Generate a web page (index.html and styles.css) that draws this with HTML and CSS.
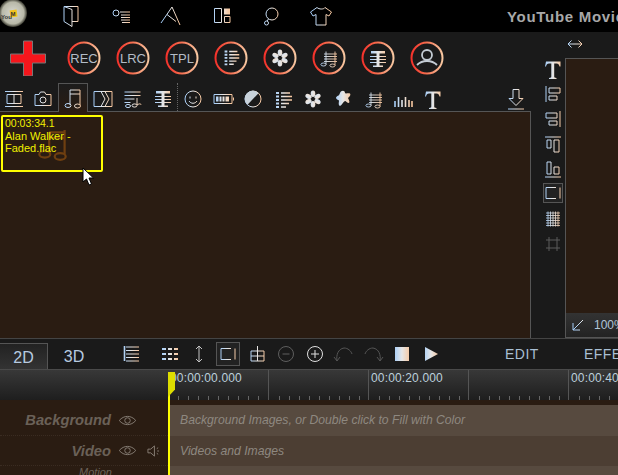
FILE: index.html
```html
<!DOCTYPE html>
<html lang="en">
<head>
    <meta charset="UTF-8">
    <meta name="viewport" content="width=device-width, initial-scale=1.0">
    <title>YouTube Movie Maker</title>
    <link rel="stylesheet" href="styles.css">
</head>
<body>
    <!-- shared gradients for the icons -->
    <svg class="defs" aria-hidden="true">
        <defs>
            <linearGradient id="g" gradientUnits="userSpaceOnUse" x1="4" y1="0" x2="20" y2="0">
                <stop offset="0" stop-color="#a5cdf8"/>
                <stop offset="0.5" stop-color="#e6e6e6"/>
                <stop offset="1" stop-color="#f6c7a0"/>
            </linearGradient>
            <linearGradient id="ring" gradientUnits="userSpaceOnUse" x1="1" y1="17" x2="33" y2="17">
                <stop offset="0" stop-color="#f5302a"/>
                <stop offset="0.45" stop-color="#f66a4c"/>
                <stop offset="1" stop-color="#f8cba4"/>
            </linearGradient>
            <radialGradient id="logoBg" cx="0.5" cy="0.5" r="0.5">
                <stop offset="0" stop-color="#d8d8d0"/>
                <stop offset="0.78" stop-color="#b8b8a8"/>
                <stop offset="1" stop-color="#3a3a30"/>
            </radialGradient>
            <symbol id="i-list" viewBox="0 0 24 24">
                <path d="M5 6h3M5 9.500h3M5 13h3M5 16.500h3M5 20h3" stroke-width="2"/>
                <path d="M10 6h9M10 9.500h11M10 13h11M10 16.500h8M10 20h5" stroke-width="1.600"/>
            </symbol>
            <symbol id="i-flower" viewBox="0 0 24 24">
                <g fill="url(#g)" stroke="none">
                    <ellipse cx="12" cy="6.800" rx="2.300" ry="3.300"/>
                    <ellipse cx="12" cy="17.200" rx="2.300" ry="3.300"/>
                    <ellipse cx="12" cy="6.800" rx="2.300" ry="3.300" transform="rotate(60 12 12)"/>
                    <ellipse cx="12" cy="6.800" rx="2.300" ry="3.300" transform="rotate(120 12 12)"/>
                    <ellipse cx="12" cy="6.800" rx="2.300" ry="3.300" transform="rotate(240 12 12)"/>
                    <ellipse cx="12" cy="6.800" rx="2.300" ry="3.300" transform="rotate(300 12 12)"/>
                </g>
            </symbol>
            <symbol id="i-score" viewBox="0 0 24 24">
                <path d="M10 5.500v13M19 5.500v14M8 8h13M8 10.500h13M8 13h13M8 15.500h13" stroke-width="0.900"/>
                <ellipse cx="7.500" cy="18.500" rx="2.600" ry="1.500" stroke-width="0.900"/>
                <ellipse cx="16.500" cy="19.500" rx="2.600" ry="1.500" stroke-width="0.900"/>
            </symbol>
            <symbol id="i-karaoke" viewBox="0 0 24 24">
                <path d="M5 5h14v2.500h-5.500v12H17v1.500H7v-1.500h3.500v-12H5z" fill="url(#g)" stroke="none"/>
                <path d="M4 10.500h16M4 13.500h16M4 16.500h16" stroke-width="1.200"/>
            </symbol>
            <symbol id="i-frame" viewBox="0 0 24 24">
                <path d="M5 6.500h10M5 6.500v11h10M19 6.500v11"/>
            </symbol>
            <symbol id="i-t" viewBox="0 0 24 24">
                <path d="M5 4.500h14.500v5h-1c-.4-2-1.300-3-3-3h-2.300v13c0 1 .6 1.300 2.300 1.500v1H8v-1c1.700-.2 2.300-.5 2.300-1.500v-13H8c-1.700 0-2.600 1-3 3H4z" fill="url(#g)" stroke="none"/>
            </symbol>
        </defs>
    </svg>

    <header class="topbar">
        <svg class="logo" viewBox="0 0 27 29">
            <circle cx="13" cy="13" r="14" fill="url(#logoBg)"/>
            <rect x="10" y="10" width="7" height="7" fill="#f2c21c" transform="rotate(-8 13 13)"/>
            <text x="1" y="19" class="logo-text">You</text>
            <text x="10.500" y="16" class="logo-text">M</text>
        </svg>
        <nav class="topnav">
            <svg class="ico" viewBox="0 0 24 24" fill="none" stroke="url(#g)">
                <path d="M5 2.500h14v15h-6M5 2.500l8 3v17l-8-5z"/>
            </svg>
            <svg class="ico" viewBox="0 0 24 24" fill="none" stroke="url(#g)">
                <circle cx="7" cy="9" r="3"/>
                <path d="M11 8h10M12 11h9M12 13.500h9M12 16h9M13 18.500h8"/>
            </svg>
            <svg class="ico" viewBox="0 0 24 24" fill="none" stroke="url(#g)">
                <path d="M2 19L13 3l8 18M8 10.500l9 7"/>
            </svg>
            <svg class="ico" viewBox="0 0 24 24" fill="none" stroke="url(#g)">
                <path d="M5.500 4.500h7v14h-7z"/>
                <path d="M15 4.500h6v6h-6z" fill="url(#g)" stroke="none"/>
                <path d="M15.500 12.500h5.500v6h-5.500z"/>
            </svg>
            <svg class="ico" viewBox="0 0 24 24" fill="none" stroke="url(#g)">
                <circle cx="13" cy="10" r="6"/>
                <circle cx="7.500" cy="19" r="2"/>
                <path d="M9.500 15l-1.500 2"/>
            </svg>
            <svg class="ico" viewBox="0 0 24 24" fill="none" stroke="url(#g)">
                <path d="M8 3.500L1.500 8l2.500 4 3-1.500v10.500h10V10.500l3 1.500 2.500-4-6.500-4.500c-1 2-6 2-8 0z"/>
            </svg>
        </nav>
        <div class="title">YouTube Movie Maker</div>
    </header>

    <div class="main">
        <section class="left-col">
            <div class="actions">
                <svg class="plus" viewBox="0 0 36 36">
                    <path d="M13.500 1h9v13h13v9h-13v13h-9V23H.5v-9h13z" fill="#f5161c" stroke="#777"/>
                </svg>
                <svg class="round" viewBox="0 0 34 34" fill="none"><circle cx="17" cy="17" r="15.500" stroke="url(#ring)"/><text x="17" y="21.500" class="round-text">REC</text></svg>
                <svg class="round" viewBox="0 0 34 34" fill="none"><circle cx="17" cy="17" r="15.500" stroke="url(#ring)"/><text x="17" y="21.500" class="round-text">LRC</text></svg>
                <svg class="round" viewBox="0 0 34 34" fill="none"><circle cx="17" cy="17" r="15.500" stroke="url(#ring)"/><text x="17" y="21.500" class="round-text">TPL</text></svg>
                <svg class="round" viewBox="0 0 34 34" fill="none"><circle cx="17" cy="17" r="15.500" stroke="url(#ring)"/><use href="#i-list" x="6" y="5" width="22" height="22" stroke="url(#g)"/></svg>
                <svg class="round" viewBox="0 0 34 34" fill="none"><circle cx="17" cy="17" r="15.500" stroke="url(#ring)"/><use href="#i-flower" x="5" y="5" width="24" height="24"/></svg>
                <svg class="round" viewBox="0 0 34 34" fill="none"><circle cx="17" cy="17" r="15.500" stroke="url(#ring)"/><use href="#i-score" x="4" y="5" width="24" height="24" stroke="url(#g)"/></svg>
                <svg class="round" viewBox="0 0 34 34" fill="none"><circle cx="17" cy="17" r="15.500" stroke="url(#ring)"/><use href="#i-karaoke" x="5" y="5" width="24" height="24" stroke="url(#g)"/></svg>
                <svg class="round" viewBox="0 0 34 34" fill="none">
                    <circle cx="17" cy="17" r="15.500" stroke="url(#ring)"/>
                    <circle cx="17" cy="14" r="5" stroke="#c4ccd4" stroke-width="1.800"/>
                    <path d="M7 24c3-3 5-4 10-4s7 1 10 4" stroke="#c4ccd4" stroke-width="1.800"/>
                </svg>
            </div>

            <div class="tabs">
                <div class="tab tab-first"><svg class="ico" viewBox="0 0 24 24" fill="none" stroke="url(#g)"><path d="M3 5.500h18M5 8.500h14v9H5zM12 8.500v9M3 20.500h18"/></svg></div>
                <div class="tab"><svg class="ico" viewBox="0 0 24 24" fill="none" stroke="url(#g)"><path d="M4 8.500h4l1.500-2.500h4L15 8.500h5v11H4z"/><circle cx="12" cy="14" r="3"/></svg></div>
                <div class="tab tab-active"><svg class="ico" viewBox="0 0 24 24" fill="none" stroke="url(#g)"><path d="M9 4v15M19 4v15M9 4h10M9 8h10"/><ellipse cx="7" cy="19.500" rx="3" ry="2"/><ellipse cx="16.500" cy="20" rx="3" ry="2"/></svg></div>
                <div class="tab"><svg class="ico" viewBox="0 0 24 24" fill="none" stroke="url(#g)"><path d="M3 5.500h18v15H3zM10 5.500l4 7.500-4 7.500M14 5.500l4 7.500-4 7.500"/></svg></div>
                <div class="tab"><svg class="ico" viewBox="0 0 24 24" fill="none" stroke="url(#g)"><path d="M3.500 6h16M3.500 9.500h16M3.500 13h10M3.500 16.500h6M16 12v7c3-2 4-1 4 0M16 19"/><ellipse cx="13.500" cy="19.500" rx="2.500" ry="1.600"/><ellipse cx="7" cy="20" rx="2.500" ry="1.600"/></svg></div>
                <div class="tab"><svg class="ico" viewBox="0 0 24 24" fill="none" stroke="url(#g)"><use href="#i-karaoke"/></svg></div>
                <div class="tab-sep"></div>
                <div class="tab"><svg class="ico" viewBox="0 0 24 24" fill="none" stroke="url(#g)"><circle cx="12" cy="13" r="8"/><path d="M9 10.500v2M15 10.500v2M8 15c2 3 6 3 8 0"/></svg></div>
                <div class="tab"><svg class="ico" viewBox="0 0 24 24" fill="none" stroke="url(#g)"><path d="M3 8.500h18v9H3zM22.500 11.500v3"/><path d="M5 10.500h13v5H5z" fill="url(#g)" stroke="none"/><path d="M8 10v6M11 10v6M14 10v6" stroke="#1a1a1a"/></svg></div>
                <div class="tab"><svg class="ico" viewBox="0 0 24 24" fill="none" stroke="url(#g)"><circle cx="12" cy="13" r="8"/><path d="M6.500 18.800L17.500 7.200A8 8 0 1 0 6.500 18.800z" fill="#c8d2da" stroke="none"/></svg></div>
                <div class="tab"><svg class="ico" viewBox="0 0 24 24" fill="none" stroke="url(#g)"><use href="#i-list" y="1"/></svg></div>
                <div class="tab"><svg class="ico" viewBox="0 0 24 24"><use href="#i-flower" y="1"/></svg></div>
                <div class="tab"><svg class="ico" viewBox="0 0 24 24"><path d="M9 7c1-3 5-3 5 0 0 1 3 0 5 .5 1 1 0 3-2 4.500 1 2 2 4 1 5-2 0-3-2-4-2-2 1-3 4-5 5-2-1-1-4-1-5.500-1-1-3-1-3-3 1-2 3-1 4-4.500z" fill="url(#g)"/></svg></div>
                <div class="tab"><svg class="ico" viewBox="0 0 24 24" fill="none" stroke="url(#g)"><use href="#i-score" y="1"/></svg></div>
                <div class="tab"><svg class="ico" viewBox="0 0 24 24" fill="none" stroke="url(#g)" stroke-width="1.600"><path d="M4 15v6M7.500 11v10M11 14v7M14.500 11v10M18 14v7M21 15v6"/></svg></div>
                <div class="tab"><svg class="ico" viewBox="0 0 24 24"><use href="#i-t" y="1"/></svg></div>
                <div class="tab tab-end"><svg class="ico" viewBox="0 0 24 24" fill="none" stroke="url(#g)"><path d="M9 3.500h6v9h4l-7 7-7-7h4zM4 23h16"/></svg></div>
            </div>

            <div class="canvas">
                <div class="clip">
                    <svg class="clip-note" viewBox="0 0 30 30" fill="none" stroke="#6f3f10" stroke-width="2">
                        <path d="M12 3v19M26 1v22M12 3h14M12 8h14"/>
                        <ellipse cx="8" cy="23" rx="5" ry="3"/>
                        <ellipse cx="22" cy="25" rx="5" ry="3"/>
                    </svg>
                    <p class="clip-text"><span class="clip-time">00:03:34.1</span><br>Alan Walker - Faded.flac</p>
                </div>
            </div>
        </section>

        <aside class="right-col">
            <div class="resize"><svg class="resize-ico" viewBox="0 0 24 12" fill="none" stroke="url(#g)"><path d="M5 6h14M8.500 2.500L5 6l3.500 3.500M15.500 2.500L19 6l-3.500 3.500"/></svg></div>
            <div class="right-body">
                <div class="side">
                    <div class="side-item"><svg class="ico" viewBox="0 0 24 24"><use href="#i-t"/></svg></div>
                    <div class="side-item"><svg class="ico" viewBox="0 0 24 24" fill="none" stroke="url(#g)"><path d="M5 4v16M8 6h11v5H8zM8 14h8v4H8z"/></svg></div>
                    <div class="side-item"><svg class="ico" viewBox="0 0 24 24" fill="none" stroke="url(#g)"><path d="M19 4v16M16 6H5v5h11zM16 14H8v4h8z"/></svg></div>
                    <div class="side-item"><svg class="ico" viewBox="0 0 24 24" fill="none" stroke="url(#g)"><path d="M4 5h16M6 8h4v8H6zM13 8h5v12h-5z"/></svg></div>
                    <div class="side-item"><svg class="ico" viewBox="0 0 24 24" fill="none" stroke="url(#g)"><path d="M4 20h16M6 5h4v12H6zM13 10h5v7h-5z"/></svg></div>
                    <div class="side-item side-active"><svg class="ico" viewBox="0 0 24 24" fill="none" stroke="url(#g)"><use href="#i-frame"/></svg></div>
                    <div class="side-item"><svg class="ico" viewBox="0 0 24 24" fill="none" stroke="url(#g)" stroke-width="0.800"><path d="M5 6h14M5 8.500h14M5 11h14M5 13.500h14M5 16h14M5 18.500h14M7 4.500v15M9.500 4.500v15M12 4.500v15M14.500 4.500v15M17 4.500v15"/></svg></div>
                    <div class="side-item"><svg class="ico" viewBox="0 0 24 24" fill="none" stroke="#5a5a5a"><path d="M5 8h14M5 16h14M8 5v14M16 5v14"/></svg></div>
                </div>
                <div class="preview">
                    <div class="preview-bar">
                        <svg class="preview-arrow" viewBox="0 0 14 14" fill="none" stroke="url(#g)"><path d="M12 2L2 12M2 5v7h7"/></svg>
                        <span class="zoom-val">100%</span>
                    </div>
                </div>
            </div>
        </aside>
    </div>

    <div class="bottom-tabs">
        <div class="mode mode-on">2D</div>
        <div class="mode mode-off">3D</div>
        <div class="tools">
            <div class="tool"><svg class="ico" viewBox="0 0 24 24" fill="none" stroke="url(#g)"><path d="M5.500 4v15" stroke-width="1.600"/><path d="M7 5h13M7 8.500h13M7 12h13M7 15.500h13M7 19h13"/></svg></div>
            <div class="tool tool-gap"><svg class="ico" viewBox="0 0 24 24" stroke="url(#g)" stroke-width="2"><path d="M4 7h4M10 7h4M16 7h4M4 12h4M10 12h4M16 12h4M4 17h4M10 17h4M16 17h4"/></svg></div>
            <div class="tool"><svg class="ico" viewBox="0 0 24 24" fill="none" stroke="#c4c4c4"><path d="M12 4v16M9 7l3-3 3 3M9 17l3 3 3-3"/></svg></div>
            <div class="tool tool-active"><svg class="ico" viewBox="0 0 24 24" fill="none" stroke="url(#g)"><use href="#i-frame"/></svg></div>
            <div class="tool"><svg class="ico" viewBox="0 0 24 24" fill="none" stroke="url(#g)"><path d="M6 9h13v10H6zM6 14h13M12.500 4v15"/></svg></div>
            <div class="tool"><svg class="ico" viewBox="0 0 24 24" fill="none" stroke="#5e5e5e"><circle cx="12" cy="12" r="7.500"/><path d="M8.500 12h7"/></svg></div>
            <div class="tool"><svg class="ico" viewBox="0 0 24 24" fill="none" stroke="#e0e0e0"><circle cx="12" cy="12" r="7.500"/><path d="M8 12h8M12 8v8"/></svg></div>
            <div class="tool"><svg class="ico" viewBox="0 0 24 24" fill="none" stroke="#555"><path d="M5 19c-1-6 1-12 7-13 4 0 7 3 8 6M2 15l3 4 3-4"/></svg></div>
            <div class="tool"><svg class="ico" viewBox="0 0 24 24" fill="none" stroke="#555"><path d="M19 19c1-6-1-12-7-13-4 0-7 3-8 6M22 15l-3 4-3-4"/></svg></div>
            <div class="tool"><svg class="ico" viewBox="0 0 24 24"><rect x="5" y="5" width="14" height="14" fill="url(#g)"/></svg></div>
            <div class="tool"><svg class="ico" viewBox="0 0 24 24"><path d="M6 5l13 7-13 7z" fill="url(#g)"/></svg></div>
        </div>
        <div class="link link-edit">EDIT</div>
        <div class="link link-effect">EFFECTS</div>
    </div>

    <div class="ruler">
        <div class="ruler-cell"><span>00:00:00.000</span></div>
        <div class="ruler-cell ruler-mark"></div>
        <div class="ruler-cell ruler-mark"><span>00:00:20.000</span></div>
        <div class="ruler-cell ruler-mark"></div>
        <div class="ruler-cell ruler-mark"><span>00:00:40.000</span></div>
    </div>

    <div class="tracks">
        <div class="track">
            <div class="track-label">
                <span class="track-name">Background</span>
                <svg class="eye" viewBox="0 0 20 12" fill="none" stroke="#77706a"><path d="M1 6c5-6 13-6 18 0-5 6-13 6-18 0z"/><circle cx="10" cy="6" r="3"/></svg>
                <span class="no-sound"></span>
            </div>
            <div class="track-body">Background Images, or Double click to Fill with Color</div>
        </div>
        <div class="track track-alt">
            <div class="track-label">
                <span class="track-name">Video</span>
                <svg class="eye" viewBox="0 0 20 12" fill="none" stroke="#77706a"><path d="M1 6c5-6 13-6 18 0-5 6-13 6-18 0z"/><circle cx="10" cy="6" r="3"/></svg>
                <svg class="sound" viewBox="0 0 14 14" fill="none" stroke="#77706a"><path d="M1 5h3l4-3.500v11L4 9H1zM10.500 4.500l1.500-1M11 7h2M10.500 9.500l1.500 1"/></svg>
            </div>
            <div class="track-body">Videos and Images</div>
        </div>
        <div class="track">
            <div class="track-label track-sub">Motion</div>
            <div class="track-body"></div>
        </div>
    </div>

    <!-- playhead and mouse pointer lie over everything -->
    <div class="playhead"></div>
    <svg class="pointer" viewBox="0 0 14 20"><path d="M1 1v14l3.500-3 2.500 6 2.500-1-2.500-6h4.500z" fill="#fff" stroke="#000"/></svg>
</body>
</html>
```

FILE: styles.css
```css
/* Page */
html, body {
    margin: 0;
    padding: 0;
}

body {
    position: relative;
    width: 618px;
    height: 475px;
    overflow: hidden;
    background-color: #1a1a1a;
    color: #ccc;
    font-family: "Liberation Sans", Arial, sans-serif;
}

.defs {
    position: absolute;
    width: 0;
    height: 0;
}

.ico {
    display: block;
    width: 24px;
    height: 24px;
    flex: none;
}

/* Top bar */
.topbar {
    display: flex;
    align-items: center;
    height: 32px;
    background-color: #000;
}

.logo {
    width: 27px;
    height: 29px;
    margin: -3px 32px 0 0;
    flex: none;
}

.logo-text {
    font-size: 6px;
    font-weight: bold;
    fill: #333;
}

.topnav {
    display: flex;
    gap: 26px;
    width: 300px;
    flex: none;
}

.title {
    margin-left: 148px;
    font-size: 15px;
    font-weight: bold;
    letter-spacing: 0.7px;
    white-space: nowrap;
    color: #a8a8a8;
}

/* Main area */
.main {
    display: flex;
    height: 306px;
}

.left-col {
    display: flex;
    flex-direction: column;
    width: 531px;
    flex: none;
}

.actions {
    display: flex;
    align-items: center;
    gap: 15px;
    height: 51px;
    padding-left: 10px;
}

.plus {
    width: 36px;
    height: 36px;
    margin-right: 6px;
}

.round {
    width: 34px;
    height: 34px;
}

.round circle:first-child {
    stroke-width: 2;
}

.round-text {
    font-size: 13px;
    text-anchor: middle;
    fill: #b4bcc6;
}

.tabs {
    display: flex;
    height: 29px;
    border-bottom: 1px solid #555;
    box-sizing: border-box;
}

.tab {
    display: flex;
    align-items: center;
    justify-content: center;
    width: 30px;
    height: 29px;
    box-sizing: border-box;
}

.tab-first {
    width: 28px;
}

.tab-active {
    border: 1px solid #555;
    border-bottom: none;
    background: linear-gradient(#1c1c1c, #2a1c12);
}

.tab-sep {
    width: 0;
    height: 28px;
    margin-left: -1px;
    border-left: 1px dotted #666;
}

.tab-end {
    margin-left: auto;
}

.canvas {
    flex: 1;
    padding: 3px 0 0 1px;
    background-color: #2a1c12;
    border-right: 1px solid #555;
}

.clip {
    position: relative;
    width: 102px;
    height: 57px;
    box-sizing: border-box;
    border: 2px solid #ff0;
    border-radius: 2px;
}

.clip-note {
    position: absolute;
    left: 33px;
    top: 12px;
    width: 33px;
    height: 33px;
}

.clip-text {
    position: relative;
    margin: 0;
    padding: 0 0 0 2px;
    font-size: 11px;
    line-height: 12.500px;
    color: #f0f000;
}

.clip-time {
    font-size: 10.500px;
}

.right-col {
    flex: 1;
    min-width: 0;
}

.resize {
    display: flex;
    align-items: center;
    height: 24px;
    padding-left: 32px;
}

.resize-ico {
    display: block;
    width: 24px;
    height: 12px;
}

.right-body {
    display: flex;
    height: 282px;
}

.side {
    width: 24px;
    padding-left: 10px;
    flex: none;
}

.side-item {
    display: flex;
    align-items: center;
    justify-content: center;
    height: 25px;
}

.side-active {
    width: 20px;
    height: 20px;
    margin: 2px 2px 3px;
    border: 1px solid #555;
    box-sizing: border-box;
    background-color: #222;
}

.preview {
    display: flex;
    flex-direction: column;
    justify-content: flex-end;
    flex: 1;
    height: 280px;
    margin-top: 2px;
    box-sizing: border-box;
    border: 1px solid #555;
    border-right: none;
    background-color: #2a1c12;
}

.preview-bar {
    display: flex;
    align-items: center;
    height: 24px;
    padding-left: 5px;
    background: linear-gradient(#333, #232323);
}

.preview-arrow {
    width: 14px;
    height: 14px;
}

.zoom-val {
    margin-left: 9px;
    font-size: 12px;
    color: #b0c4d8;
    white-space: nowrap;
}

/* Tool row above the timeline */
.bottom-tabs {
    display: flex;
    align-items: center;
    height: 31px;
    border-top: 1px solid #444;
    box-sizing: border-box;
}

.mode {
    width: 50px;
    height: 26px;
    margin-top: 4px;
    text-align: center;
    font-size: 16px;
    line-height: 27px;
    color: #b7cbe0;
    flex: none;
}

.mode-on {
    width: 48px;
    box-sizing: border-box;
    border-top: 1px solid #555;
    border-right: 1px solid #555;
    background: linear-gradient(#222, #333);
}

.mode-off {
    padding-left: 2px;
    box-sizing: border-box;
}

.tools {
    display: flex;
    align-items: center;
    margin-left: 18px;
    flex: none;
}

.tool {
    display: flex;
    align-items: center;
    justify-content: center;
    width: 29px;
    height: 24px;
}

.tool-gap {
    margin-left: 10px;
}

.tool-active {
    box-sizing: border-box;
    width: 24px;
    margin: 0 2.500px;
    border: 1px solid #555;
    background-color: #222;
}

.link {
    font-size: 14px;
    letter-spacing: 0.5px;
    color: #a9bfd4;
    white-space: nowrap;
    flex: none;
}

.link-edit {
    margin-left: 60px;
}

.link-effect {
    margin-left: 45px;
}

/* Timeline ruler */
.ruler {
    display: flex;
    height: 36px;
    padding-left: 168px;
    border-bottom: 5px solid #2a1c12;
    border-top: 1px solid #4a4a4a;
    box-sizing: border-box;
    background: linear-gradient(#383838, #1e1e1e);
}

.ruler-cell {
    position: relative;
    width: 100px;
    flex: none;
    box-sizing: border-box;
    padding: 1px 0 0 2px;
    font-size: 12px;
    letter-spacing: 0.15px;
    color: #bcd0dc;
    white-space: nowrap;
    background: repeating-linear-gradient(90deg, #666 0, #666 1px, transparent 1px, transparent 10px) 10px bottom / 100% 4px no-repeat;
}

.ruler-mark {
    border-left: 1px solid #555;
}

/* Tracks */
.track {
    display: flex;
    height: 31px;
}

.track-alt {
    height: 30px;
}

.track-label {
    display: flex;
    align-items: center;
    justify-content: flex-end;
    width: 168px;
    flex: none;
    box-sizing: border-box;
    padding-right: 8px;
    background-color: #2a1c12;
    border-bottom: 1px dotted #3a2c22;
}

.track-name {
    font-size: 14.700px;
    font-weight: bold;
    font-style: italic;
    color: #6a6158;
}

.eye {
    width: 19px;
    height: 11px;
    margin-left: 7px;
    stroke: #8a8178;
}

.sound {
    width: 13px;
    height: 14px;
    margin-left: 10px;
    stroke: #8a8178;
}

.no-sound {
    width: 13px;
    margin-left: 10px;
}

.track-sub {
    align-items: flex-start;
    padding: 0 56px 0 0;
    border-bottom: none;
    font-size: 11px;
    font-style: italic;
    color: #6a6158;
}

.track-body {
    flex: 1;
    padding-left: 12px;
    font-size: 12.200px;
    font-style: italic;
    line-height: 31px;
    color: #8e8880;
    white-space: nowrap;
    background-color: #574a3f;
}

.track-alt .track-body {
    line-height: 30px;
    background-color: #4c3e33;
}

/* Overlays */
.playhead {
    position: absolute;
    left: 168px;
    top: 395px;
    bottom: 0;
    width: 1.500px;
    background-color: #ff0;
}

.playhead::before {
    content: "";
    position: absolute;
    left: 0;
    top: -23px;
    width: 7px;
    height: 25px;
    background-color: #dede00;
    clip-path: polygon(0 0, 100% 0, 100% 70%, 0 100%);
}

.pointer {
    position: absolute;
    left: 82px;
    top: 167px;
    width: 14px;
    height: 20px;
}
```
